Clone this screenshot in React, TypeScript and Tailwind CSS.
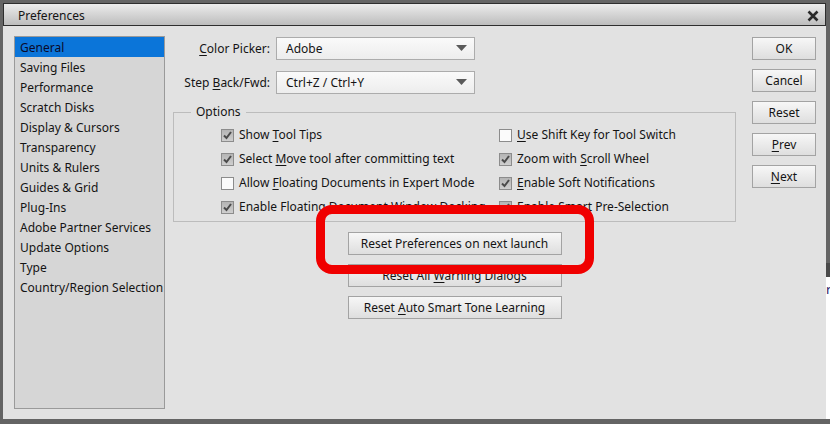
import React from 'react';

const font = { fontFamily: '"Noto Sans", "DejaVu Sans", sans-serif' };

const U = ({ children }: { children: React.ReactNode }) => <span className="underline underline-offset-2">{children}</span>;

const Check = ({ checked }: { checked: boolean }) => (
  <span
    className={`w-[13px] h-[13px] border border-[#8c8c8c] flex items-center justify-center shrink-0 ${
      checked ? 'bg-gradient-to-b from-[#b4b4b4] to-[#cfcfcf]' : 'bg-[#fbfbfb]'
    }`}
  >
    {checked && (
      <svg width="11" height="11" viewBox="0 0 11 11">
        <path d="M2 5.5 L4.5 8 L9 2" fill="none" stroke="#4a4a4a" strokeWidth="2" />
      </svg>
    )}
  </span>
);

const Option = ({ checked, children }: { checked: boolean; children: React.ReactNode }) => (
  <div className="h-[24px] flex items-center gap-[5px] text-[12px] text-[#141414] whitespace-nowrap">
    <Check checked={checked} />
    <span>{children}</span>
  </div>
);

const Btn = ({ children, w }: { children: React.ReactNode; w: string }) => (
  <div
    className={`${w} h-[23px] border border-[#a3a3a3] bg-gradient-to-b from-[#f7f7f7] to-[#dedede] flex items-center justify-center text-[12px] text-[#141414] whitespace-nowrap`}
  >
    <span>{children}</span>
  </div>
);

const Select = ({ value }: { value: string }) => (
  <div className="w-[199px] h-[23px] border border-[#acacac] bg-gradient-to-b from-[#fafafa] to-[#ededed] flex items-center justify-between pl-[9px] pr-[7px] text-[12px] text-[#141414]">
    <span>{value}</span>
    <svg width="11" height="7" viewBox="0 0 11 7">
      <path d="M0 0 H11 L5.5 6 Z" fill="#5a5a5a" />
    </svg>
  </div>
);

const categories = [
  'General',
  'Saving Files',
  'Performance',
  'Scratch Disks',
  'Display & Cursors',
  'Transparency',
  'Units & Rulers',
  'Guides & Grid',
  'Plug-Ins',
  'Adobe Partner Services',
  'Update Options',
  'Type',
  'Country/Region Selection',
];

export default function App() {
  return (
    <div className="w-[830px] h-[424px] bg-[#646464] flex overflow-hidden" style={font}>
      <div className="pt-[3px] pl-[3px] flex flex-col">
        <div className="relative w-[823px] h-[416px] bg-[#e2e2e2] flex flex-col">
          {/* title bar */}
          <div className="h-[23px] border border-[#2e2e2e] bg-gradient-to-b from-[#ececec] to-[#bdbdbd] flex items-center justify-between pl-[14px] pr-[6px]">
            <span className="text-[12px] text-[#141414] mt-[3px]">Preferences</span>
            <svg width="12" height="12" viewBox="0 0 12 12" className="mt-[2px]">
              <path d="M1.5 1.5 L10.5 10.5 M10.5 1.5 L1.5 10.5" stroke="#2a2a2a" strokeWidth="2.6" />
            </svg>
          </div>

          <div className="flex flex-1 pt-[10px] pl-[11px] pr-[10px] pb-[10px]">
            {/* sidebar */}
            <div className="w-[151px] h-[373px] border border-[#9a9a9a] bg-[#d6d6d6] flex flex-col">
              {categories.map((c, i) => (
                <div
                  key={c}
                  className={`h-[20px] pl-[5px] pt-[1px] flex items-center text-[12px] whitespace-nowrap ${
                    i === 0 ? 'bg-[#0b75d9] text-[#0a0a2a]' : 'text-[#141414]'
                  }`}
                >
                  {c}
                </div>
              ))}
            </div>

            {/* middle */}
            <div className="ml-[8px] w-[563px] flex flex-col">
              <div className="flex items-center mt-[1px]">
                <div className="w-[97px] text-right text-[12px] text-[#141414]">
                  <U>C</U>olor Picker:
                </div>
                <div className="ml-[6px]">
                  <Select value="Adobe" />
                </div>
              </div>
              <div className="flex items-center mt-[11px]">
                <div className="w-[97px] text-right text-[12px] text-[#141414] whitespace-nowrap">
                  Step <U>B</U>ack/Fwd:
                </div>
                <div className="ml-[6px]">
                  <Select value="Ctrl+Z / Ctrl+Y" />
                </div>
              </div>

              {/* options group */}
              <div className="relative mt-[18px] h-[110px] border border-[#bcbcbc] flex pt-[10px] pl-[47px]">
                <span className="absolute -top-[10px] left-[17px] px-[5px] bg-[#e2e2e2] text-[12px] text-[#141414]">
                  Options
                </span>
                <div className="w-[278px] flex flex-col">
                  <Option checked>Show <U>T</U>ool Tips</Option>
                  <Option checked>Select <U>M</U>ove tool after committing text</Option>
                  <Option checked={false}>Allow <U>F</U>loating Documents in Expert Mode</Option>
                  <Option checked>Enable Floating Document Window Docking</Option>
                </div>
                <div className="flex flex-col">
                  <Option checked={false}><U>U</U>se Shift Key for Tool Switch</Option>
                  <Option checked>Zoom with <U>S</U>croll Wheel</Option>
                  <Option checked><U>E</U>nable Soft Notifications</Option>
                  <Option checked>Enable Smart Pre-Selection</Option>
                </div>
              </div>

              <div className="mt-[10px] flex flex-col items-center gap-[9px]">
                <Btn w="w-[214px]">Reset Preferences on next launch</Btn>
                <Btn w="w-[214px]">Reset All <U>W</U>arning Dialogs</Btn>
                <Btn w="w-[214px]">Reset <U>A</U>uto Smart Tone Learning</Btn>
              </div>
            </div>

            {/* right buttons */}
            <div className="ml-auto mt-[1px] flex flex-col gap-[9px]">
              <Btn w="w-[64px]">OK</Btn>
              <Btn w="w-[64px]">Cancel</Btn>
              <Btn w="w-[64px]">Reset</Btn>
              <Btn w="w-[64px]"><U>P</U>rev</Btn>
              <Btn w="w-[64px]"><U>N</U>ext</Btn>
            </div>
          </div>

          {/* red annotation */}
          <div className="absolute left-[313px] top-[202px] w-[278px] h-[69px] border-[9px] border-[#f00000] rounded-[16px]" />
        </div>
      </div>

      {/* desktop strip to the right */}
      <div className="flex-1 flex flex-col">
        <div className="h-[263px]" />
        <div className="h-[14px] bg-[#4a4a4a]" />
        <div className="h-[142px] bg-white text-[13px] text-[#2a1a6a] leading-none pt-[6px] overflow-hidden">r</div>
      </div>
    </div>
  );
}
